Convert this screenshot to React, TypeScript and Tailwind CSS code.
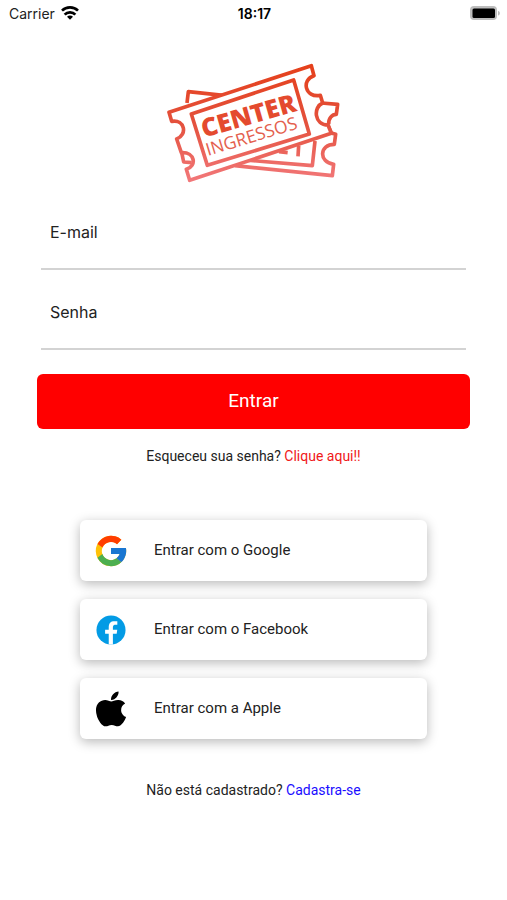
import { useId } from 'react';
import type { ReactNode } from 'react';

function WifiIcon() {
  return (
    <svg viewBox="0 0 54 42" className="h-[14px] w-[18px]" fill="none" stroke="#000" strokeWidth="8" aria-hidden="true">
      <path d="M3 14C16 1 38 1 51 14" />
      <path d="M11 26C19 17 35 17 43 26" />
      <path d="M18 32C23 27 31 27 36 32L27 41Z" fill="#000" stroke="none" />
    </svg>
  );
}

function BatteryIcon() {
  return (
    <svg viewBox="0 0 30 15" className="h-[15px] w-[30px]" aria-hidden="true">
      <rect x="0" y="0" width="27" height="14" rx="4" fill="#bdbdbd" />
      <rect x="2.5" y="2.5" width="22.5" height="9.5" rx="1.5" fill="#000" />
      <path d="M28 5C30.5 5.5 30.5 9 28 9.500Z" fill="#bdbdbd" />
    </svg>
  );
}

function StatusBar() {
  return (
    <header className="grid h-[26px] grid-cols-3 items-center pr-[7px] pl-[9px] font-[Inter,sans-serif] text-[14px] text-[#222]">
      <div className="flex items-center gap-[6px]">
        <span>Carrier</span>
        <WifiIcon />
      </div>
      <span className="text-center font-semibold text-black">18:17</span>
      <div className="flex justify-end">
        <BatteryIcon />
      </div>
    </header>
  );
}

function Logo() {
  return (
    <svg viewBox="0 0 570 405" className="h-[135px] w-[190px]" role="img" aria-label="Center Ingressos">
      <defs>
        <linearGradient id="ticket" gradientUnits="userSpaceOnUse" x1="0" y1="30" x2="0" y2="380">
          <stop offset="0" stopColor="#e5401b" />
          <stop offset="0.5" stopColor="#e4513d" />
          <stop offset="1" stopColor="#f2787a" />
        </linearGradient>
      </defs>
      <g fill="none" stroke="url(#ticket)" strokeWidth="11" strokeLinejoin="round">
        {/* back ticket */}
        <path d="M84 144L88 110L200 122" />
        <path d="M68 292L74 321L98 323" />
        <path d="M488 144L536 148L532 178C519 178 508 190 509 208" />
        <path d="M507 210L517 234L530 238L526 268C481 268 478 322 524 328L520 362L228 332" />
        <path d="M258 315L460 332L468 258" />
        <path d="M360 290L386 293M419 272L417 304" />
        {/* front ticket */}
        <path d="M30 172L457 32L465 62C426 74 438 130 484 121L491 144C462 156 465 210 507 210L517 235L92 376L82 343C114 334 109 290 67 293L53 252C86 240 78 192 38 199Z" fill="#fff" />
        <path d="M97 177L404 75L451 237L145 331Z" />
      </g>
      <g style={{ fontFamily: '"Open Sans", sans-serif' }}>
        <text transform="translate(135 248) rotate(-16)" fontSize="76" fontWeight="800" fill="#e44a2e">CENTER</text>
        <text transform="translate(147 303) rotate(-17)" fontSize="53" fontWeight="400" fill="#e4604e">INGRESSOS</text>
      </g>
    </svg>
  );
}

function GoogleIcon() {
  return (
    <svg viewBox="3 3 42 42" className="size-8" aria-hidden="true">
      <path fill="#ffc107" d="M43.600 20H24v8h11.300C33.700 32.700 29.200 36 24 36a12 12 0 1 1 7.900-21l5.700-5.700A20 20 0 1 0 43.600 20z" />
      <path fill="#ff3d00" d="M6.300 14.700l6.600 4.800A12 12 0 0 1 31.900 15l5.700-5.700A20 20 0 0 0 6.300 14.700z" />
      <path fill="#4caf50" d="M24 44c5.200 0 9.900-2 13.400-5.200l-6.200-5.200A12 12 0 0 1 12.700 28l-6.500 5A20 20 0 0 0 24 44z" />
      <path fill="#1976d2" d="M43.600 20H24v8h11.300a12 12 0 0 1-4.100 5.600l6.200 5.200C37 39.200 44 34 44 24c0-1.300-.1-2.700-.4-4z" />
    </svg>
  );
}

function FacebookIcon() {
  return (
    <svg viewBox="2 2 44 44" className="size-8" aria-hidden="true">
      <circle cx="24" cy="24" r="20" fill="#039be5" />
      <path fill="#fff" d="M26.600 29h5.200l.8-5.300h-6v-2.900c0-2.200.7-4.100 2.800-4.100h3.300V12.100c-.6-.1-1.800-.3-4.100-.3-4.900 0-7.700 2.600-7.700 8.400v3.500h-5V29h5v14.700a20 20 0 0 0 5.700.1z" />
    </svg>
  );
}

function AppleIcon() {
  return (
    <svg viewBox="-8 24 400 464" className="h-9 w-8" preserveAspectRatio="none" aria-hidden="true">
      <path d="M318.700 268.700c-.2-36.700 16.400-64.400 50-84.800-18.800-26.900-47.200-41.700-84.700-44.600-35.500-2.800-74.300 20.700-88.500 20.700-15 0-49.400-19.700-76.400-19.700C63.300 141.200 4 184.800 4 273.500q0 39.300 14.400 81.200c12.800 36.700 59 126.700 107.200 125.200 25.200-.6 43-17.900 75.800-17.900 31.800 0 48.300 17.900 76.400 17.900 48.600-.7 90.400-82.500 102.600-119.300-65.200-30.700-61.700-90-61.700-91.900zM262.100 104.500c27.300-32.400 24.800-61.900 24-72.500-24.100 1.400-52 16.400-67.900 34.900-17.500 19.800-27.800 44.300-25.600 71.900 26.100 2 49.900-11.400 69.500-34.300z" />
    </svg>
  );
}

function Field({ label, type }: { label: string; type: string }) {
  const id = useId();
  return (
    <div className="flex h-[80px] flex-col border-b-2 border-[#d3d3d3] px-[9px] pt-[30px]">
      <label htmlFor={id} className="font-[Inter,sans-serif] text-base leading-6 text-[#222]">
        {label}
      </label>
      <input id={id} type={type} className="h-6 w-full bg-transparent outline-none" />
    </div>
  );
}

function SocialButton({ icon, children }: { icon: ReactNode; children: ReactNode }) {
  return (
    <button
      type="button"
      className="flex h-[61px] w-full items-center gap-[27px] rounded-[6px] bg-white px-[15px] text-[15px] text-[#222] shadow-[0_3px_12px_rgba(0,0,0,0.28)]"
    >
      {icon}
      <span>{children}</span>
    </button>
  );
}

export default function App() {
  return (
    <div className="min-h-screen bg-white font-[Roboto,sans-serif] text-[#222]">
      <StatusBar />

      <main className="flex flex-col items-center px-[37px] pt-[29px]">
        <Logo />

        <form className="w-full" onSubmit={(e) => e.preventDefault()}>
          <div className="px-1">
            <Field label="E-mail" type="email" />
            <Field label="Senha" type="password" />
          </div>
          <button type="submit" className="mt-6 h-[55px] w-full rounded-[6px] bg-[#ff0000] text-[19px] text-white">
            Entrar
          </button>
        </form>

        <p className="mt-[17px] text-[14px] leading-5">
          Esqueceu sua senha? <a href="#" className="text-[#f01818]">Clique aqui!!</a>
        </p>

        <div className="mt-[54px] flex w-full flex-col gap-[18px] px-[43px]">
          <SocialButton icon={<GoogleIcon />}>Entrar com o Google</SocialButton>
          <SocialButton icon={<FacebookIcon />}>Entrar com o Facebook</SocialButton>
          <SocialButton icon={<AppleIcon />}>Entrar com a Apple</SocialButton>
        </div>

        <p className="mt-[41px] text-[14px] leading-5">
          Não está cadastrado? <a href="#" className="text-[#1a0dff]">Cadastra-se</a>
        </p>
      </main>
    </div>
  );
}
